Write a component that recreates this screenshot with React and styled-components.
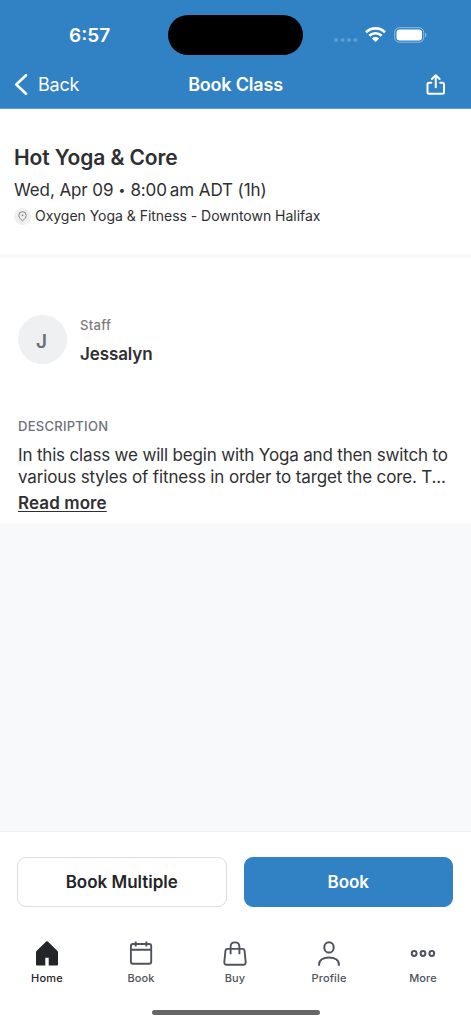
import React from 'react';
import styled, { createGlobalStyle } from 'styled-components';

const GlobalStyle = createGlobalStyle`
  * {
    box-sizing: border-box;
  }

  body {
    margin: 0;
    background: #fff;
    font-family: Inter, 'Liberation Sans', sans-serif;
    color: #2f2f31;
  }

  button {
    font-family: inherit;
    padding: 0;
    border: none;
    background: none;
  }

  svg {
    display: block;
  }
`;

const BLUE = '#3182c4';

const tabs = [
  { label: 'Home', icon: HomeIcon, active: true, spacing: 0.2 },
  { label: 'Book', icon: CalendarIcon, spacing: 0.1 },
  { label: 'Buy', icon: BagIcon, spacing: 0.1 },
  { label: 'Profile', icon: ProfileIcon, spacing: 0.15 },
  { label: 'More', icon: MoreIcon, spacing: 0.1 },
];

function HomeIcon() {
  return (
    <svg width="28" height="28" viewBox="0 0 28 28">
      <path
        d="M13.2 1.600a1.200 1.200 0 0 1 1.600 0l9.500 9.200c.500.500.700 1 .700 1.600v12.200a1 1 0 0 1-1 1h-8.300v-7.800h-3.400v7.800H4a1 1 0 0 1-1-1V12.400c0-.600.200-1.100.700-1.600z"
        fill="#232529"
      />
    </svg>
  );
}

function CalendarIcon() {
  return (
    <svg width="28" height="28" viewBox="0 0 28 28" fill="none" stroke="#50535d" strokeWidth="1.9">
      <rect x="3.900" y="4" width="20.300" height="19.800" rx="2" />
      <path d="M3.900 9.800h20.300M8.700 1.400v5M19.400 1.400v5" />
    </svg>
  );
}

function BagIcon() {
  return (
    <svg width="28" height="28" viewBox="0 0 28 28" fill="none" stroke="#50535d" strokeWidth="1.9">
      <path d="M6.400 8.900h15.200c1 0 1.700.7 1.900 1.600l1.200 11.600c.1 1.500-.8 2.700-2.400 2.700H5.700c-1.600 0-2.500-1.200-2.400-2.700l1.200-11.600c.2-.9.900-1.600 1.900-1.600z" />
      <path d="M9.600 14.300V6.700c0-2.600 1.800-4.300 4.400-4.300s4.400 1.700 4.400 4.300v7.600" />
    </svg>
  );
}

function ProfileIcon() {
  return (
    <svg width="28" height="28" viewBox="0 0 28 28" fill="none" stroke="#50535d" strokeWidth="2">
      <ellipse cx="14" cy="7.400" rx="4.700" ry="5.200" />
      <path d="M4.100 25.700v-1.200c0-4.300 4.100-7 9.900-7s9.900 2.700 9.900 7v1.200" />
    </svg>
  );
}

function MoreIcon() {
  return (
    <svg width="28" height="28" viewBox="0 0 28 28" fill="none" stroke="#50535d" strokeWidth="2">
      <circle cx="5.200" cy="13.500" r="2.400" />
      <circle cx="14" cy="13.500" r="2.400" />
      <circle cx="22.800" cy="13.500" r="2.400" />
    </svg>
  );
}

function StatusIcons() {
  return (
    <svg width="96" height="20" viewBox="0 0 96 20">
      <g fill="#fff" fillOpacity="0.22">
        <circle cx="3" cy="15" r="2.100" />
        <circle cx="9.500" cy="15" r="2.100" />
        <circle cx="16" cy="15" r="2.100" />
        <circle cx="22.300" cy="15" r="2.100" />
      </g>
      <g fill="none" stroke="#fff" strokeWidth="2.700">
        <path d="M33 7.200a13.600 13.600 0 0 1 19 0" />
        <path d="M36.400 10.700a8.800 8.800 0 0 1 12.200 0" />
      </g>
      <path d="M38.900 13.500a5.200 5.200 0 0 1 7.200 0L42.500 17z" fill="#fff" />
      <rect x="61.700" y="2.700" width="29" height="14.500" rx="4.600" fill="none" stroke="#fff" strokeOpacity="0.450" />
      <rect x="63.500" y="4.600" width="25.500" height="10.800" rx="3" fill="#fff" />
      <path d="M92.200 7.700c1.600.5 1.600 4.100 0 4.600z" fill="#fff" fillOpacity="0.500" />
    </svg>
  );
}

function App() {
  return (
    <Screen>
      <GlobalStyle />
      <Header>
        <StatusBar>
          <Clock>6:57</Clock>
          <Island />
          <StatusIcons />
        </StatusBar>
        <NavBar>
          <BackButton>
            <svg width="14" height="22" viewBox="0 0 14 22" fill="none" stroke="#fff" strokeWidth="2.600" strokeLinecap="round" strokeLinejoin="round">
              <path d="M12 1.300 2.300 10.500 12 19.700" />
            </svg>
            <Text size={18} spacing={-0.25}>Back</Text>
          </BackButton>
          <Text size={18} weight={600} spacing={-0.2}>Book Class</Text>
          <ShareButton>
            <svg width="20" height="22" viewBox="0 0 20 22" fill="none" stroke="#fff" strokeWidth="2" strokeLinecap="round" strokeLinejoin="round">
              <path d="M5.300 8.800H3a1.500 1.500 0 0 0-1.500 1.500v8A1.500 1.500 0 0 0 3 19.800h13.500a1.500 1.500 0 0 0 1.500-1.500v-8A1.500 1.500 0 0 0 16.500 8.800h-2.300" />
              <path d="M9.750 13.300V1.200M5.900 5l3.850-3.800L13.600 5" />
            </svg>
          </ShareButton>
        </NavBar>
      </Header>

      <Summary>
        <Title>Hot Yoga &amp; Core</Title>
        <When>
          <span>Wed, Apr 09</span>
          <Bullet>•</Bullet>
          <span>8:00</span>
          <Period>am ADT (1h)</Period>
        </When>
        <Location>
          <PinBadge>
            <svg width="9" height="11" viewBox="0 0 10 12" fill="none" stroke="#77777b" strokeWidth="1">
              <path d="M5 11C3.500 9.500.9 7.400.9 4.800a4.100 4.100 0 0 1 8.200 0C9.100 7.400 6.500 9.500 5 11z" />
              <circle cx="5" cy="4.700" r="0.900" fill="#77777b" stroke="none" />
            </svg>
          </PinBadge>
          <Text size={14} spacing={-0.03}>Oxygen Yoga &amp; Fitness - Downtown Halifax</Text>
        </Location>
      </Summary>

      <Details>
        <Staff>
          <Avatar>J</Avatar>
          <StaffInfo>
            <StaffRole>Staff</StaffRole>
            <StaffName>Jessalyn</StaffName>
          </StaffInfo>
        </Staff>
        <SectionLabel>DESCRIPTION</SectionLabel>
        <Description>
          <DescriptionLine $spacing={-0.17}>In this class we will begin with Yoga and then switch to</DescriptionLine>
          <DescriptionLine $spacing={-0.14}>various styles of fitness in order to target the core. T...</DescriptionLine>
        </Description>
        <ReadMore>Read more</ReadMore>
      </Details>

      <Filler />

      <Footer>
        <Actions>
          <ActionButton>Book Multiple</ActionButton>
          <ActionButton $primary>Book</ActionButton>
        </Actions>
        <TabBar>
          {tabs.map(({ label, icon: Icon, active, spacing }) => (
            <Tab key={label} $active={active}>
              <Icon />
              <Text size={11} weight={500} spacing={spacing}>{label}</Text>
            </Tab>
          ))}
        </TabBar>
        <HomeIndicator />
      </Footer>
    </Screen>
  );
}

function Text({ size, weight, spacing, children }) {
  return <Label $size={size} $weight={weight} $spacing={spacing}>{children}</Label>;
}

const Label = styled.span`
  font-size: ${(p) => p.$size}px;
  font-weight: ${(p) => p.$weight || 400};
  letter-spacing: ${(p) => p.$spacing}px;
  white-space: nowrap;
`;

const Screen = styled.div`
  display: flex;
  flex-direction: column;
  width: 471px;
  height: 1024px;
  overflow: hidden;
`;

const Header = styled.header`
  height: 109px;
  background: ${BLUE};
  border-bottom: 1px solid #5a9bd0;
  color: #fff;
`;

const StatusBar = styled.div`
  display: grid;
  grid-template-columns: 99px 135px auto;
  justify-content: start;
  align-items: center;
  height: 55px;
  padding: 15px 0 0 69px;

  svg {
    margin-left: 30px;
  }
`;

const Clock = styled.span`
  font-size: 19px;
  font-weight: 600;
`;

const Island = styled.div`
  height: 40px;
  border-radius: 20px;
  background: #000;
`;

const NavBar = styled.nav`
  display: grid;
  grid-template-columns: 1fr auto 1fr;
  align-items: center;
  height: 53px;
  padding: 6px 14px 0;
`;

const BackButton = styled.button`
  display: flex;
  align-items: center;
  gap: 10px;
  color: #fff;
`;

const ShareButton = styled.button`
  justify-self: end;
  margin-right: 11px;
`;

const Summary = styled.section`
  height: 149px;
  padding: 35px 14px 0;
  border-bottom: 4px solid #f7f9fb;
`;

const Title = styled.h1`
  margin: 0;
  font-size: 21px;
  font-weight: 600;
  line-height: 27px;
  letter-spacing: -0.1px;
`;

const When = styled.div`
  display: flex;
  align-items: center;
  margin-top: 7px;
  font-size: 17px;
  line-height: 24px;
  letter-spacing: -0.1px;
`;

const Bullet = styled.span`
  width: 17px;
  text-align: center;
  font-size: 12px;
`;

const Period = styled.span`
  margin-left: 3px;
`;

const Location = styled.div`
  display: flex;
  align-items: center;
  gap: 4px;
  margin-top: 5px;
  line-height: 18px;
`;

const PinBadge = styled.span`
  display: grid;
  place-items: center;
  width: 17px;
  height: 17px;
  border-radius: 50%;
  background: #efefef;
`;

const Details = styled.section`
  height: 265px;
  padding: 57px 18px 0;
`;

const Staff = styled.div`
  display: flex;
  gap: 13px;
`;

const Avatar = styled.div`
  display: grid;
  place-items: center;
  width: 49px;
  height: 49px;
  padding: 4px 2px 0 0;
  border-radius: 50%;
  background: #eff0f2;
  color: #6c6e78;
  font-size: 19px;
  font-weight: 600;
`;

const StaffInfo = styled.div`
  display: flex;
  flex-direction: column;
`;

const StaffRole = styled.span`
  font-size: 13px;
  line-height: 20px;
  letter-spacing: 0.3px;
  color: #7b7b7d;
  font-weight: 500;
`;

const StaffName = styled.span`
  margin-top: 7px;
  font-size: 17px;
  font-weight: 600;
  line-height: 24px;
  letter-spacing: -0.1px;
`;

const SectionLabel = styled.h2`
  margin: 51px 0 0;
  font-size: 13px;
  line-height: 18px;
  letter-spacing: 0.27px;
  font-weight: 500;
  color: #6e707a;
`;

const Description = styled.div`
  margin-top: 9px;
`;

const DescriptionLine = styled.div`
  font-size: 17px;
  line-height: 22px;
  letter-spacing: ${(p) => p.$spacing}px;
  white-space: nowrap;
`;

const ReadMore = styled.button`
  margin-top: 4px;
  font-size: 17px;
  font-weight: 600;
  line-height: 22px;
  letter-spacing: 0.1px;
  color: #2f2f31;
  text-decoration: underline;
  text-decoration-thickness: 1px;
  text-underline-offset: 2px;
`;

const Filler = styled.div`
  height: 308px;
  background: #f7f9fb;
`;

const Footer = styled.footer`
  display: flex;
  flex-direction: column;
  height: 193px;
  border-top: 1px solid #f0f1f3;
`;

const Actions = styled.div`
  display: grid;
  grid-template-columns: 1fr 1fr;
  gap: 17px;
  padding: 25px 18px 0 17px;
`;

const ActionButton = styled.button`
  height: 50px;
  border: 1px solid ${(p) => (p.$primary ? BLUE : '#dcdde0')};
  border-radius: 9px;
  background: ${(p) => (p.$primary ? BLUE : '#fff')};
  color: ${(p) => (p.$primary ? '#fff' : '#232529')};
  font-size: 17px;
  font-weight: 600;
`;

const TabBar = styled.nav`
  display: grid;
  grid-template-columns: repeat(5, 94px);
  padding-top: 33px;
`;

const Tab = styled.div`
  display: flex;
  flex-direction: column;
  align-items: center;
  gap: 2px;
  line-height: 16px;
  color: ${(p) => (p.$active ? '#232529' : '#50535d')};
`;

const HomeIndicator = styled.div`
  width: 168px;
  height: 5px;
  margin: 24px 0 0 152px;
  border-radius: 3px;
  background: #666;
`;

export default App;
